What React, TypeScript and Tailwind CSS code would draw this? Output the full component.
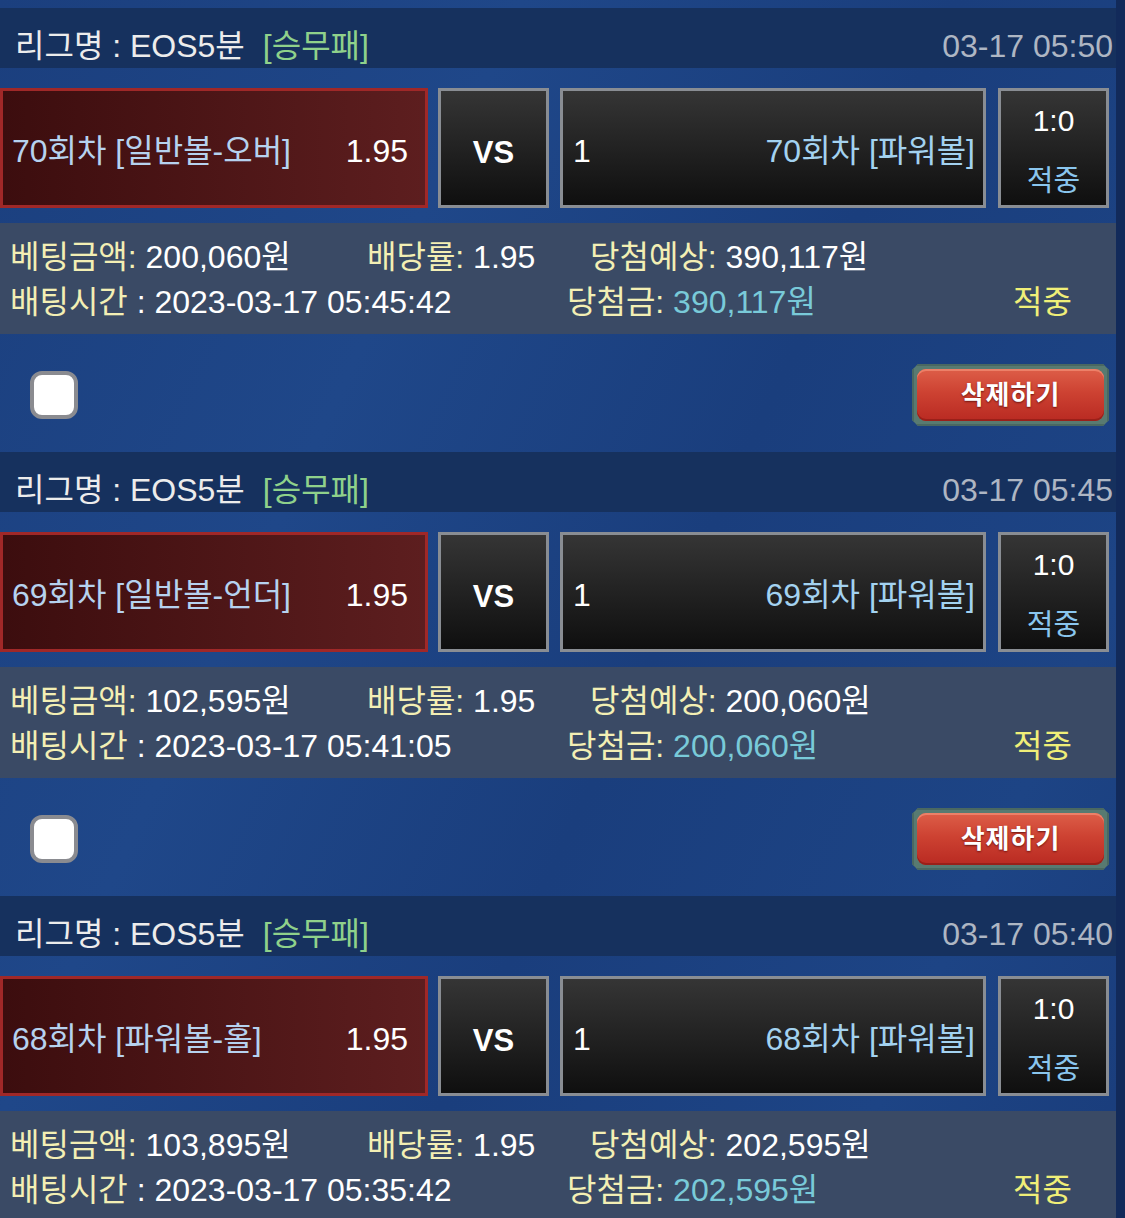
import React from 'react';

type Bet = {
  time: string;
  pick: string;
  team: string;
  amount: string;
  expect: string;
  betTime: string;
  win: string;
};

const bets: Bet[] = [
  {
    time: '03-17 05:50',
    pick: '70회차 [일반볼-오버]',
    team: '70회차 [파워볼]',
    amount: '200,060원',
    expect: '390,117원',
    betTime: '2023-03-17 05:45:42',
    win: '390,117원',
  },
  {
    time: '03-17 05:45',
    pick: '69회차 [일반볼-언더]',
    team: '69회차 [파워볼]',
    amount: '102,595원',
    expect: '200,060원',
    betTime: '2023-03-17 05:41:05',
    win: '200,060원',
  },
  {
    time: '03-17 05:40',
    pick: '68회차 [파워볼-홀]',
    team: '68회차 [파워볼]',
    amount: '103,895원',
    expect: '202,595원',
    betTime: '2023-03-17 05:35:42',
    win: '202,595원',
  },
];

function BetCard({ bet }: { bet: Bet }) {
  return (
    <div>
      {/* league header */}
      <div className="h-[60px] bg-[#16315e] flex justify-between pt-[20px] leading-[36px] text-[32px] pl-[15px] pr-[3px]">
        <div className="text-[#ececec]">
          리그명 : EOS5분<span className="ml-[18px] text-[#8fd18b]">[승무패]</span>
        </div>
        <div className="text-[#aeb6c3]">{bet.time}</div>
      </div>

      {/* match row */}
      <div className="flex mt-[20px] h-[120px]">
        <div className="w-[428px] border-[3px] border-[#a02828] bg-[linear-gradient(90deg,#3c0d0e,#5d1e1f)] flex items-center justify-between pl-[9px] pr-[17px] pt-[5px] text-[32px]">
          <span className="text-[#b6d2ef]">{bet.pick}</span>
          <span className="text-white">1.95</span>
        </div>
        <div className="ml-[10px] w-[111px] border-[3px] border-[#898d93] bg-[linear-gradient(180deg,#353535,#0f0f0f)] flex items-center justify-center pt-[10px]">
          <span className="text-white font-bold text-[31px]">VS</span>
        </div>
        <div className="ml-[11px] w-[426px] border-[3px] border-[#898d93] bg-[linear-gradient(180deg,#353535,#0f0f0f)] flex items-center justify-between pl-[10px] pr-[8px] pt-[5px] text-[32px]">
          <span className="text-white">1</span>
          <span className="text-[#a3d2f0]">{bet.team}</span>
        </div>
        <div className="ml-[12px] w-[111px] border-[3px] border-[#898d93] bg-[linear-gradient(180deg,#353535,#0f0f0f)] flex flex-col items-center justify-center pt-[6px] text-[30px] leading-[60px]">
          <span className="text-white">1:0</span>
          <span className="text-[#8ac6ee] text-[29px]">적중</span>
        </div>
      </div>

      {/* info panel */}
      <div className="mt-[15px] h-[111px] bg-[#3a4a65] pt-[12px] pl-[10px] text-[32px] leading-[45px]">
        <div className="flex">
          <div className="w-[357px]">
            <span className="text-[#f3efb4]">베팅금액:</span> <span className="text-white">{bet.amount}</span>
          </div>
          <div className="w-[223px]">
            <span className="text-[#f3efb4]">배당률:</span> <span className="text-white">1.95</span>
          </div>
          <div>
            <span className="text-[#f3efb4]">당첨예상:</span> <span className="text-white">{bet.expect}</span>
          </div>
        </div>
        <div className="flex">
          <div className="w-[557px]">
            <span className="text-[#f3efb4]">배팅시간</span> <span className="text-white">: {bet.betTime}</span>
          </div>
          <div className="w-[446px]">
            <span className="text-[#f3efb4]">당첨금:</span> <span className="text-[#79cad9]">{bet.win}</span>
          </div>
          <div className="text-[#f0ef78]">적중</div>
        </div>
      </div>

      {/* actions */}
      <div className="h-[118px] flex items-center justify-between pl-[30px] pr-[7px]">
        <div className="w-[48px] h-[48px] rounded-[12px] border-[4px] border-[#8a8b90] bg-white mt-[4px]" />
        <div className="w-[197px] h-[62px] bg-[#587a71] [clip-path:polygon(6px_0,191px_0,197px_6px,197px_56px,191px_62px,6px_62px,0_56px,0_6px)] p-[5px] mt-[4px] shadow-[inset_0_0_0_2px_#4a6861]">
          <div className="h-full rounded-[9px] bg-[linear-gradient(180deg,#dd5e48_0%,#cd4232_45%,#b92a22_100%)] shadow-[inset_0_2px_0_#ec8068,inset_0_-2px_0_#9a2019] flex items-center justify-center">
            <span className="text-white font-bold text-[26px] [text-shadow:0_1px_2px_#6a1410] tracking-[1px]">삭제하기</span>
          </div>
        </div>
      </div>
    </div>
  );
}

export default function App() {
  return (
    <div className="w-full h-[1218px] overflow-hidden bg-[#122a5a] [font-family:'Liberation_Sans','Noto_Sans_CJK_KR',sans-serif]">
      <div className="w-[1116px] pt-[8px] bg-[#1c4282] bg-[linear-gradient(115deg,#1b3f7e_0%,#1f4789_30%,#1a3e7d_55%,#1d4485_80%,#193b79_100%)]">
        {bets.map((b) => (
          <BetCard key={b.time} bet={b} />
        ))}
      </div>
    </div>
  );
}
